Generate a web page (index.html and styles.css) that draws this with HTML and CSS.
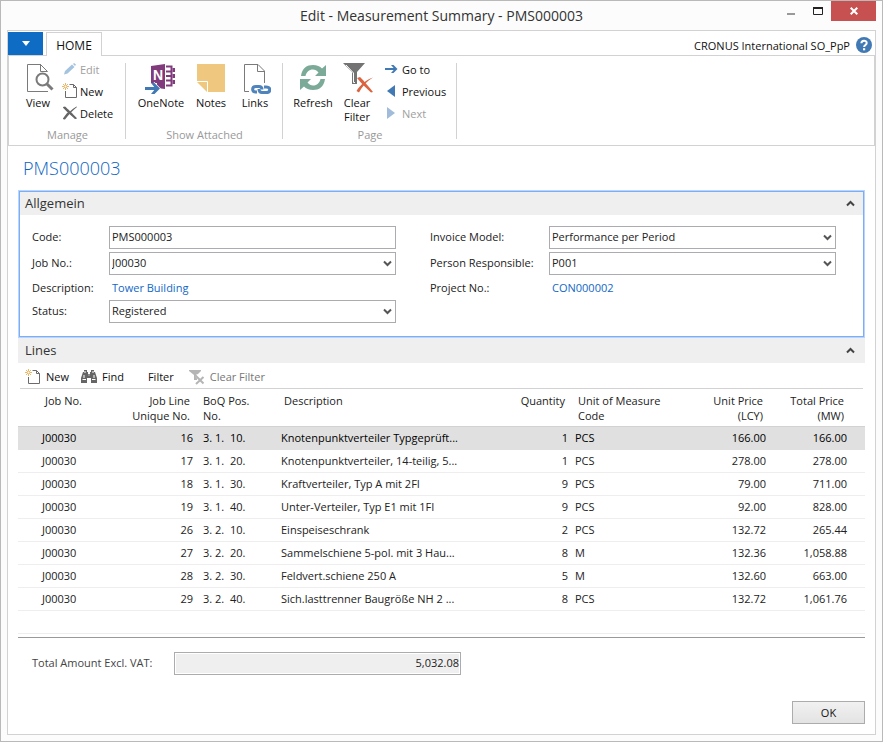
FILE: index.html
```html
<!DOCTYPE html>
<html lang="en">
<head>
<meta charset="utf-8">
<title>Edit - Measurement Summary - PMS000003</title>
<link rel="stylesheet" href="styles.css">
</head>
<body>
<svg class="defs" aria-hidden="true">
  <symbol id="i-new" viewBox="0 0 16 16">
    <path d="M7.5 1.500H11.500L14.500 4.500V14.500H3.500V8" fill="none" stroke="#6b6b6b"/>
    <path d="M11.500 1.500V4.500H14.500" fill="none" stroke="#6b6b6b"/>
    <path d="M3.500 0V7M0 3.500H7M1 1L6 6M6 1L1 6" stroke="#e9b766" stroke-width="1"/>
    <circle cx="3.500" cy="3.500" r="1" fill="#fff"/>
  </symbol>
  <symbol id="i-down" viewBox="0 0 9 7"><path d="M1 1.500L4.500 5L8 1.500" fill="none" stroke="#555" stroke-width="2"/></symbol>
  <symbol id="i-up" viewBox="0 0 9 7"><path d="M1 5.500L4.500 2L8 5.500" fill="none" stroke="#444" stroke-width="2"/></symbol>
</svg>
<div class="window">
  <header class="titlebar">
    <h1>Edit - Measurement Summary - PMS000003</h1>
    <div class="winbtns">
      <button class="winbtn" aria-label="Minimize"><svg width="10" height="10"><path d="M1 8H9" stroke="#999" stroke-width="2"/></svg></button>
      <button class="winbtn" aria-label="Maximize"><svg width="10" height="10"><path d="M.5 2V8.500H9.500V2" fill="none" stroke="#222"/><path d="M0 2H10" stroke="#222" stroke-width="2"/></svg></button>
      <button class="winbtn close" aria-label="Close"><svg width="8" height="8"><path d="M.7.7L7.300 7.300M7.300.7L.7 7.300" stroke="#fff" stroke-width="2"/></svg></button>
    </div>
  </header>
  <main class="frame">
    <nav class="tabs">
      <button class="appmenu" aria-label="Application menu"><svg width="8" height="5"><path d="M0 0H8L4 5Z" fill="#fff"/></svg></button>
      <button class="tab">HOME</button>
      <span class="company">CRONUS International SO_PpP</span>
      <button class="help" aria-label="Help"><svg width="16" height="16"><circle cx="8" cy="8" r="8" fill="#4179b5"/><path d="M5.400 6.300C5.400 3 10.700 3 10.700 6C10.700 8 8.100 7.900 8.100 10" fill="none" stroke="#fff" stroke-width="2"/><path d="M7 11.200H9.200V13.300H7Z" fill="#fff"/></svg></button>
    </nav>
    <div class="ribbon">
      <section class="group g-manage">
        <div class="tools">
          <button class="big view"><svg width="32" height="32"><path d="M19 1.500H5.500V28.500H26" fill="none" stroke="#7a7a7a"/><path d="M18.500 1.500L25.500 8.500M18.500 1.500V8.500H25.500" fill="none" stroke="#7a7a7a"/><circle cx="20.500" cy="16.500" r="6" fill="#fff" stroke="#7a7a7a" stroke-width="2"/><path d="M25 21L30.500 26.500" stroke="#7a7a7a" stroke-width="3"/></svg>View</button>
          <div class="stack">
            <button class="small" disabled><svg width="16" height="16"><path d="M3 10L10 3.500L12.500 6L5.500 12.500L2 13.500ZM11 3L12 2L14 3.500L13 5Z" fill="#a4c3df"/></svg>Edit</button>
            <button class="small"><svg width="16" height="16"><use href="#i-new"/></svg>New</button>
            <button class="small"><svg width="16" height="16"><path d="M1 2.500L3 1.500C5 3 11 9 15 13.500L13 14C9 10.500 5 7 1 2.500Z" fill="#666"/><path d="M14.500 1.500C10 4 5 9 1 14L3 14.500C6.500 10 10 6 15 2Z" fill="#666"/><path d="M1.500 2L14 13.500M6 8L1.500 14" stroke="#666" stroke-width="1.500"/></svg>Delete</button>
          </div>
        </div>
        <h2>Manage</h2>
      </section>
      <section class="group g-attach">
        <div class="tools">
          <button class="big onenote"><svg width="32" height="32"><path d="M6 3L20 1V26L12 25V20H6Z" fill="#813a7c"/><path d="M21 3.500H26.500V22.500H21M21 8.500H26M21 13H26M21 17.500H26" fill="none" stroke="#813a7c" stroke-width="2"/><path d="M27.500 5H30V9H27.500ZM27.500 11H30V15H27.500ZM27.500 17H30V21H27.500Z" fill="#813a7c"/><text x="8" y="17" class="nmark">N</text><path d="M0 25.500H11M8 20.500L13 25.500L8 30.500" fill="none" stroke="#fff" stroke-width="4"/><path d="M0 25.500H12" stroke="#4179b5" stroke-width="3"/><path d="M6 20H9.500L15 25.500L9.500 31H6L10.500 25.500Z" fill="#4179b5"/></svg>OneNote</button>
          <button class="big notes"><svg width="32" height="32"><path d="M2 1H30V29H12L2 19Z" fill="#efc77f"/><path d="M2 18.500H12.500V29" fill="none" stroke="#fff"/><path d="M3 19.500H12V28Z" fill="#efc77f"/></svg>Notes</button>
          <button class="big links"><svg width="32" height="32"><path d="M10 28.500H5.500V1.500H19L25.500 8V20" fill="none" stroke="#7a7a7a"/><path d="M18.500 1.500V8.500H25.500" fill="none" stroke="#7a7a7a"/><g fill="none" stroke="#4f83bb" stroke-width="3"><path d="M18 29H17C12.500 29 12.500 23.500 17 23.500H20C22 23.500 23 24.500 23 26.500"/><path d="M20 26C20 28 21 29.500 23 29.500H27C32 29.500 32 24 27 24H25"/></g></svg>Links</button>
        </div>
        <h2>Show Attached</h2>
      </section>
      <section class="group g-page">
        <div class="tools">
          <button class="big refresh"><svg width="32" height="32"><g fill="#7bab98"><path id="rf" d="M4 13C5 5 10 2 16 2C20 2 23 3.500 25 5.500L29 2V13H18L21.500 9.500C20 7.500 18 6.500 16 6.500C12 6.500 9.500 9 8.500 13Z"/><use href="#rf" transform="rotate(180 16 14.500)"/></g></svg>Refresh</button>
          <button class="big clear"><svg width="32" height="32"><path d="M2 0H24L16 9V21H11V9Z" fill="#737373"/><path d="M5 2L12.500 10V19.500H14" fill="none" stroke="#fff" stroke-width="1"/><path d="M16 15L19 14C23 18 28 24 32 29L30 29.500C25 25 20 20 16 15Z" fill="#da6340"/><path d="M32 14.500C26 18 21 24 18 29.500L15.500 28C19 22 25 17 32 14.500Z" fill="#da6340"/></svg>Clear<br>Filter</button>
          <div class="stack">
            <button class="small"><svg width="16" height="16"><path d="M1 8H11" stroke="#4179b5" stroke-width="2"/><path d="M7 4H9.500L13.500 8L9.500 12H7L10.500 8Z" fill="#4179b5"/></svg>Go to</button>
            <button class="small"><svg width="16" height="16"><path d="M3 8L11 2V14Z" fill="#4179b5"/></svg>Previous</button>
            <button class="small" disabled><svg width="16" height="16"><path d="M11 8L3 2V14Z" fill="#a0bcda"/></svg>Next</button>
          </div>
        </div>
        <h2>Page</h2>
      </section>
    </div>
    <div class="page">
      <h2 class="pagetitle">PMS000003</h2>
      <section class="panel">
        <header class="bar"><h3>Allgemein</h3><button class="toggle" aria-label="Collapse Allgemein"><svg width="9" height="7"><use href="#i-up"/></svg></button></header>
        <div class="fields">
          <div class="col left">
            <label for="code">Code:</label><input id="code" class="box" value="PMS000003">
            <label for="job">Job No.:</label><div class="combo"><select id="job" class="box"><option>J00030</option></select><svg width="9" height="7"><use href="#i-down"/></svg></div>
            <span class="lbl">Description:</span><a href="#">Tower Building</a>
            <label for="status">Status:</label><div class="combo"><select id="status" class="box"><option>Registered</option></select><svg width="9" height="7"><use href="#i-down"/></svg></div>
          </div>
          <div class="col right">
            <label for="model">Invoice Model:</label><div class="combo"><select id="model" class="box"><option>Performance per Period</option></select><svg width="9" height="7"><use href="#i-down"/></svg></div>
            <label for="person">Person Responsible:</label><div class="combo"><select id="person" class="box"><option>P001</option></select><svg width="9" height="7"><use href="#i-down"/></svg></div>
            <span class="lbl">Project No.:</span><a href="#">CON000002</a>
          </div>
        </div>
      </section>
      <section class="lines">
        <header class="bar"><h3>Lines</h3><button class="toggle" aria-label="Collapse Lines"><svg width="9" height="7"><use href="#i-up"/></svg></button></header>
        <div class="toolbar">
          <button><svg width="16" height="16"><use href="#i-new"/></svg>New</button>
          <button><svg width="16" height="16"><path d="M3 1H6V3H7V5H9V3H10V1H13V3H14L16 9V14H10V9H6V14H0V9L2 3H3Z" fill="#666"/><path d="M4 2V4M12 2V4M3 6V9M13 6V9M7.500 6H8.500M1.500 10.500H5M11 10.500H14.500" stroke="#fff"/></svg>Find</button>
          <button class="plain">Filter</button>
          <button class="off" disabled><svg width="16" height="16"><path d="M0 1H12V2L8 6V11H5V6L0 2Z" fill="#b5b5b5"/><path d="M7 6L14 14.500M14.500 8L7 15" stroke="#fff" stroke-width="3"/><path d="M6 6L14.500 14.500M14.500 8L7 15" stroke="#b5b5b5" stroke-width="2"/></svg>Clear Filter</button>
        </div>
        <table>
          <colgroup><col class="c1"><col class="c2"><col class="c3"><col><col class="c5"><col class="c6"><col class="c7"><col class="c8"></colgroup>
          <thead><tr><th>Job No.</th><th class="num">Job Line<br>Unique No.</th><th>BoQ Pos.<br>No.</th><th>Description</th><th class="num">Quantity</th><th>Unit of Measure<br>Code</th><th class="num">Unit Price<br>(LCY)</th><th class="num">Total Price<br>(MW)</th></tr></thead>
          <tbody>
            <tr class="sel"><td>J00030</td><td class="num">16</td><td>3. 1.  10.</td><td>Knotenpunktverteiler Typgeprüft...</td><td class="num">1</td><td>PCS</td><td class="num">166.00</td><td class="num">166.00</td></tr>
            <tr><td>J00030</td><td class="num">17</td><td>3. 1.  20.</td><td>Knotenpunktverteiler, 14-teilig, 5...</td><td class="num">1</td><td>PCS</td><td class="num">278.00</td><td class="num">278.00</td></tr>
            <tr><td>J00030</td><td class="num">18</td><td>3. 1.  30.</td><td>Kraftverteiler, Typ A mit 2FI</td><td class="num">9</td><td>PCS</td><td class="num">79.00</td><td class="num">711.00</td></tr>
            <tr><td>J00030</td><td class="num">19</td><td>3. 1.  40.</td><td>Unter-Verteiler, Typ E1 mit 1FI</td><td class="num">9</td><td>PCS</td><td class="num">92.00</td><td class="num">828.00</td></tr>
            <tr><td>J00030</td><td class="num">26</td><td>3. 2.  10.</td><td>Einspeiseschrank</td><td class="num">2</td><td>PCS</td><td class="num">132.72</td><td class="num">265.44</td></tr>
            <tr><td>J00030</td><td class="num">27</td><td>3. 2.  20.</td><td>Sammelschiene 5-pol. mit 3 Hau...</td><td class="num">8</td><td>M</td><td class="num">132.36</td><td class="num">1,058.88</td></tr>
            <tr><td>J00030</td><td class="num">28</td><td>3. 2.  30.</td><td>Feldvert.schiene 250 A</td><td class="num">5</td><td>M</td><td class="num">132.60</td><td class="num">663.00</td></tr>
            <tr><td>J00030</td><td class="num">29</td><td>3. 2.  40.</td><td>Sich.lasttrenner Baugröße NH 2 ...</td><td class="num">8</td><td>PCS</td><td class="num">132.72</td><td class="num">1,061.76</td></tr>
            <tr><td colspan="8"></td></tr>
          </tbody>
        </table>
        <div class="total"><label for="total">Total Amount Excl. VAT:</label><input id="total" class="box" value="5,032.08" readonly></div>
      </section>
      <footer><button class="ok">OK</button></footer>
    </div>
  </main>
</div>
</body>
</html>
```
FILE: styles.css
```css
* { box-sizing: border-box; }
body { margin: 0; font: 11px/15px "Open Sans", "Noto Sans", sans-serif; color: #222; }
h1, h2, h3 { margin: 0; font-weight: 400; }
button { margin: 0; padding: 0; border: 0; background: none; font: inherit; color: #111; }
svg { display: block; flex: none; }
a { color: #1268c6; text-decoration: none; }
.defs { position: absolute; width: 0; height: 0; }

.window { display: flex; flex-direction: column; min-height: 100vh; padding: 0 6px 6px; border: 1px solid #b9b9b9; background: #fcfcfc; }
.titlebar { display: grid; grid-template-columns: 1fr auto 1fr; height: 29px; }
.titlebar h1 { grid-column: 2; font-size: 14px; line-height: 29px; color: #333; }
.winbtns { display: flex; justify-content: flex-end; height: 20px; }
.winbtn { display: grid; place-items: center; width: 27px; height: 20px; }
.winbtn.close { width: 45px; background: #c75050; }

.frame { flex: 1; display: flex; flex-direction: column; border: 1px solid #d2d2d2; background: #fff; }
.tabs { display: flex; align-items: center; height: 24px; padding-top: 1px; }
.appmenu { display: grid; place-items: center; width: 35px; height: 23px; background: #0f6cc5; }
.tab { position: relative; width: 56px; height: 24px; margin: 0 0 -1px 3px; padding-top: 1px; border: 1px solid #d2d2d2; border-bottom: 0; background: #fff; font-size: 12px; }
.company { margin-left: auto; padding-top: 4px; color: #111; }
.help { margin: 2px 3px 0 6px; }

.ribbon { display: flex; height: 91px; padding-top: 3px; border: 1px solid #d2d2d2; }
.group { position: relative; height: 84px; }
.group::after { content: ""; position: absolute; right: 0; top: 4px; bottom: 4px; width: 1px; background: #d2d2d2; }
.group h2 { font-size: 11px; line-height: 15px; color: #999; text-align: center; }
.tools { display: flex; height: 68px; }
.g-manage { width: 117px; }
.g-manage .tools { padding-left: 10px; }
.g-attach { width: 157px; }
.g-attach .tools { padding-left: 9px; }
.g-page { width: 174px; }
.g-page .tools { padding-left: 8px; }
.big { display: flex; flex-direction: column; align-items: center; justify-content: flex-start; line-height: 14px; padding-top: 4px; height: 68px; }
.big svg { margin-bottom: 1px; }
.view { width: 38px; }
.onenote { width: 52px; }
.notes { width: 48px; }
.links { width: 40px; }
.refresh, .clear { width: 44px; }
.stack { margin-left: 5px; }
.small { display: flex; align-items: center; gap: 2px; height: 22px; padding-bottom: 2px; }
.small:disabled { color: #a0a0a0; }
.nmark { font: 700 14px "Liberation Sans", sans-serif; fill: #fff; }

.page { flex: 1; display: flex; flex-direction: column; padding: 11px 10px 10px; }
.pagetitle { padding-left: 5px; font-size: 18px; font-weight: 300; line-height: 22px; color: #0a64c2; }
.panel { margin-top: 11px; border: 1px solid #b8d6fd; background: #fff; }
.panel > * { border: 0 solid #7dadf5; border-width: 0 1px; }
.panel > .bar { border-top-width: 1px; height: 24px; padding: 0 8px 0 5px; }
.panel > .fields { border-bottom-width: 1px; }
.bar { display: flex; justify-content: space-between; align-items: center; height: 25px; padding: 0 10px 0 7px; background: #efefef; }
.bar h3 { padding-bottom: 1px; font-size: 13px; line-height: 20px; color: #333; }
.fields { display: grid; grid-template-columns: 364fr 406fr; gap: 34px; padding: 11px 27px 13px 12px; }
.col { display: grid; grid-auto-rows: 23px; row-gap: 3px; align-content: start; align-items: center; }
.left { grid-template-columns: 77px 1fr; grid-template-rows: 23px 23px 19px 23px; }
.right { grid-template-columns: 119px 1fr; grid-template-rows: 23px 23px 19px; }
.col label { padding-bottom: 2px; }
.col a { padding-left: 3px; }
.box { width: 100%; height: 23px; margin: 0; padding: 0 2px 2px; border: 1px solid #ababb0; border-radius: 0; background: #fff; font: inherit; color: #222; appearance: none; }
.combo { display: grid; align-items: center; }
.combo > * { grid-area: 1 / 1; }
.combo svg { justify-self: end; margin-right: 4px; pointer-events: none; }

.toolbar { display: flex; align-items: center; height: 26px; margin: 0 2px; padding: 2px 0 0 5px; border-bottom: 1px solid #d2d2d2; }
.toolbar button { display: flex; align-items: center; gap: 5px; margin-right: 12px; }
.toolbar .plain { margin: 0 15px 0 12px; }
.toolbar .off { color: #777; }
table { width: 100%; border-collapse: separate; border-spacing: 0; table-layout: fixed; border-bottom: 1px solid #999; padding-bottom: 3px; }
.c1 { width: 100px; }
.c2 { width: 80px; }
.c3 { width: 78px; }
.c5 { width: 74px; }
.c6 { width: 122px; }
.c7 { width: 76px; }
.c8 { width: 97px; }
th { height: 38px; padding: 4px 8px 3px; border-bottom: 1px solid #d2d2d2; font-weight: 400; text-align: left; vertical-align: top; white-space: nowrap; }
td { height: 23px; padding: 0 5px 2px; border-bottom: 1px solid #eee; white-space: pre; overflow: hidden; }
th:first-child { padding-left: 27px; }
td:first-child { padding-left: 24px; }
th:nth-child(3) { padding-left: 5px; }
.num { text-align: right; }
th:nth-child(5), th:nth-child(7) { padding-right: 5px; }
td:nth-child(5), td:nth-child(7) { padding-right: 2px; }
th:last-child { padding-right: 21px; }
td:last-child { padding-right: 18px; }
.sel td { background: #e0e0e0; border-color: #e0e0e0; color: #000; }
.total { display: grid; grid-template-columns: 142px minmax(0, 287px); align-items: center; padding: 14px 0 0 14px; color: #444; }
.total label { padding-bottom: 2px; }
.total .box { padding: 0 1px 2px; background: #efefef; box-shadow: inset 0 0 0 1px #fff; text-align: right; }
footer { display: flex; justify-content: flex-end; margin-top: auto; }
.ok { width: 73px; height: 23px; border: 1px solid #acacac; background: linear-gradient(#f1f1f1, #e3e3e3); }
```
